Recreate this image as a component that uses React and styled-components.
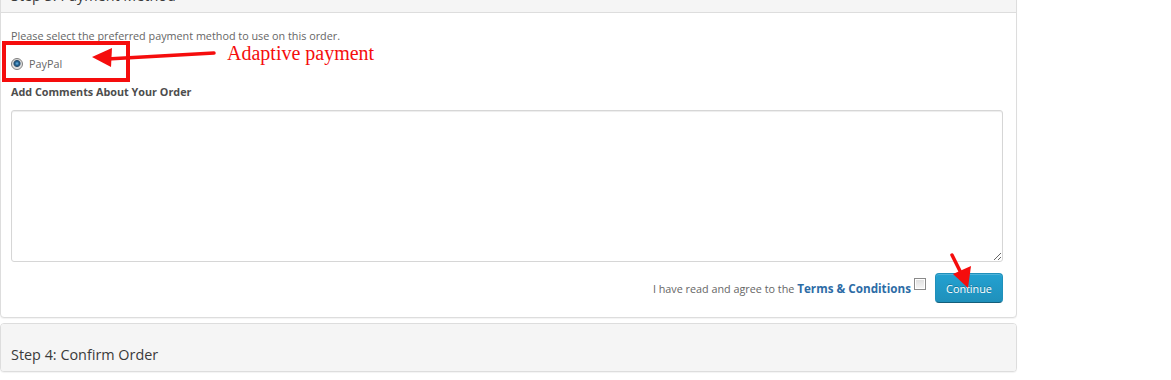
import React from 'react';
import styled, { createGlobalStyle } from 'styled-components';

const GlobalStyle = createGlobalStyle`
  body {
    margin: 0;
    background: #fff;
    font-family: "Open Sans", "DejaVu Sans", sans-serif;
    color: #666;
  }
`;

const Stage = styled.div`
  position: relative;
  display: flow-root;
  width: 1171px;
  height: 380px;
  overflow: hidden;
`;

const Checkout = styled.div`
  width: 1017px;
  margin-top: -36px;
`;

const Panel = styled.div`
  background: #fff;
  border: 1px solid #ddd;
  border-radius: 4px;
  box-shadow: 0 1px 1px rgba(0, 0, 0, 0.05);
  margin-bottom: 5px;
  overflow: hidden;
`;

const PanelHeading = styled.div`
  background: #f5f5f5;
  padding: 21px 10px 6px;
  border-bottom: ${(p) => (p.$open ? '1px solid #ddd' : 'none')};
  font-size: 14.4px;
  line-height: 20px;
  color: #3a3a3a;
`;

const PanelBody = styled.div`
  padding: 14px 14px 14px 10px;
  font-size: 10.8px;
  line-height: 18px;
`;

const Note = styled.p`
  margin: 0 0 10px;
  color: #666;
`;

const RadioRow = styled.label`
  display: flex;
  align-items: center;
  gap: 6px;
  height: 18px;
  margin-bottom: 10px;
  color: #666;
`;

const Radio = styled.span`
  width: 10px;
  height: 10px;
  border-radius: 50%;
  border: 1px solid #7d7d7d;
  background: radial-gradient(circle at 50% 45%, #6fb3e0 0, #1e5f8f 2px, #2b4e6b 3px, #d8d8d8 4px, #f2f2f2 6px);
  box-sizing: content-box;
`;

const Label = styled.div`
  font-weight: 700;
  color: #4d4d4d;
  margin-bottom: 9px;
`;

const Comments = styled.textarea`
  display: block;
  box-sizing: border-box;
  width: 992px;
  height: 152px;
  margin: 0;
  border: 1px solid #d6d6d6;
  border-radius: 3px;
  box-shadow: inset 0 1px 1px rgba(0, 0, 0, 0.075);
  font-family: inherit;
  font-size: 10.8px;
  resize: both;
  outline: none;
`;

const Agree = styled.div`
  display: flex;
  justify-content: flex-end;
  align-items: center;
  width: 992px;
  margin-top: 11px;
  color: #666;
`;

const TermsLink = styled.a`
  color: #2d6ca6;
  font-weight: 700;
  font-size: 11.7px;
  text-decoration: none;
`;

const Check = styled.span`
  display: inline-block;
  width: 10px;
  height: 10px;
  margin: -8px 9px 0 3px;
  border: 1px solid #8a8a8a;
  background: linear-gradient(#dedede, #f7f7f7);
  box-shadow: inset 0 0 0 1px #fff;
`;

const Button = styled.button`
  width: 68px;
  height: 30px;
  padding: 0;
  border: 1px solid #1f90bb;
  border-bottom-color: #145e7a;
  border-radius: 4px;
  background: linear-gradient(to bottom, #23a1d1, #1f90bb);
  color: #fff;
  font-family: inherit;
  font-size: 10.8px;
  text-shadow: 0 -1px 0 rgba(0, 0, 0, 0.25);
  box-shadow: inset 0 1px 0 rgba(255, 255, 255, 0.2);
`;

const Highlight = styled.div`
  position: absolute;
  left: 2px;
  top: 41px;
  width: 128px;
  height: 41px;
  box-sizing: border-box;
  border: 4px solid #f50d0d;
  pointer-events: none;
`;

const Callout = styled.span`
  position: absolute;
  left: 227px;
  top: 43px;
  font-family: "Liberation Serif", "Times New Roman", serif;
  font-size: 20px;
  line-height: 20px;
  color: #f50d0d;
  white-space: nowrap;
`;

const Arrows = styled.svg`
  position: absolute;
  left: 0;
  top: 0;
  pointer-events: none;
`;

export default function App() {
  return (
    <Stage>
      <GlobalStyle />
      <Checkout>
        <Panel>
          <PanelHeading $open>Step 3: Payment Method</PanelHeading>
          <PanelBody>
            <Note>Please select the preferred payment method to use on this order.</Note>
            <RadioRow>
              <Radio />
              PayPal
            </RadioRow>
            <Label>Add Comments About Your Order</Label>
            <Comments />
            <Agree>
              <span>
                I have read and agree to the <TermsLink href="#">Terms &amp; Conditions</TermsLink>
              </span>
              <Check />
              <Button>Continue</Button>
            </Agree>
          </PanelBody>
        </Panel>
        <Panel>
          <PanelHeading>Step 4: Confirm Order</PanelHeading>
        </Panel>
      </Checkout>

      <Highlight />
      <Callout>Adaptive payment</Callout>
      <Arrows width="1171" height="380" viewBox="0 0 1171 380">
        <line x1="107" y1="59" x2="214" y2="53" stroke="#f50d0d" strokeWidth="3.5" strokeLinecap="round" />
        <polygon points="92,57 112,48 111,67" fill="#f50d0d" />
        <line x1="952" y1="255" x2="961" y2="273" stroke="#f50d0d" strokeWidth="3.5" strokeLinecap="round" />
        <polygon points="968,288 953,274 971,266" fill="#f50d0d" />
      </Arrows>
    </Stage>
  );
}
